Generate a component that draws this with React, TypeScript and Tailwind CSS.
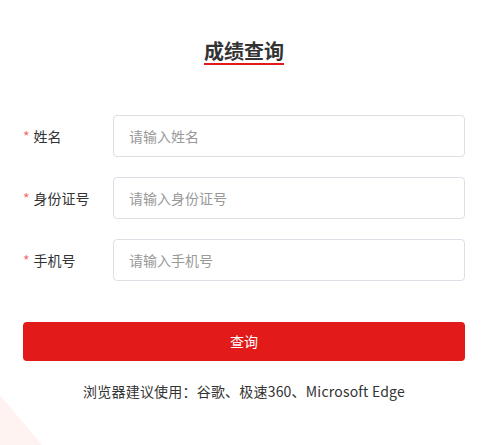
import { useState } from "react";

const fields = [
  { label: "姓名", placeholder: "请输入姓名" },
  { label: "身份证号", placeholder: "请输入身份证号" },
  { label: "手机号", placeholder: "请输入手机号" },
];

export default function App() {
  const [values, setValues] = useState<string[]>(["", "", ""]);

  return (
    <div
      className="relative w-[500px] h-[445px] overflow-hidden bg-white text-[#333]"
      style={{ fontFamily: '"Microsoft YaHei", "Noto Sans CJK SC", sans-serif' }}
    >
      {/* corner decoration */}
      <svg className="absolute left-0 bottom-0" width="60" height="60" viewBox="0 0 60 60">
        <polygon points="0,10 0,60 42,60" fill="#fff3f2" />
      </svg>

      <div className="relative flex flex-col px-[23px] pr-[35px]">
        <div className="flex justify-center pt-[39px]">
          <h1 className="text-[20px] font-bold leading-[24px] border-b-2 border-[#e21a1a]">
            成绩查询
          </h1>
        </div>

        <div className="flex flex-col gap-[20px] mt-[50px]">
          {fields.map((f, i) => (
            <div key={f.label} className="flex items-center">
              <label className="w-[90px] flex items-center text-[14px]">
                <span className="text-[#f56c6c] mr-[4px] text-[14px]">*</span>
                {f.label}
              </label>
              <input
                className="flex-1 h-[42px] rounded-[4px] border border-[#dcdfe6] px-[15px] text-[14px] outline-none placeholder:text-[#999]"
                placeholder={f.placeholder}
                value={values[i]}
                onChange={(e) => {
                  const next = [...values];
                  next[i] = e.target.value;
                  setValues(next);
                }}
              />
            </div>
          ))}
        </div>

        <button className="mt-[41px] h-[39px] rounded-[4px] bg-[#e21a1a] text-white text-[14px]">
          查询
        </button>

        <p className="mt-[20px] text-center text-[14px] tracking-[0.2px] text-[#333]">
          浏览器建议使用：谷歌、极速360、Microsoft Edge
        </p>
      </div>
    </div>
  );
}
